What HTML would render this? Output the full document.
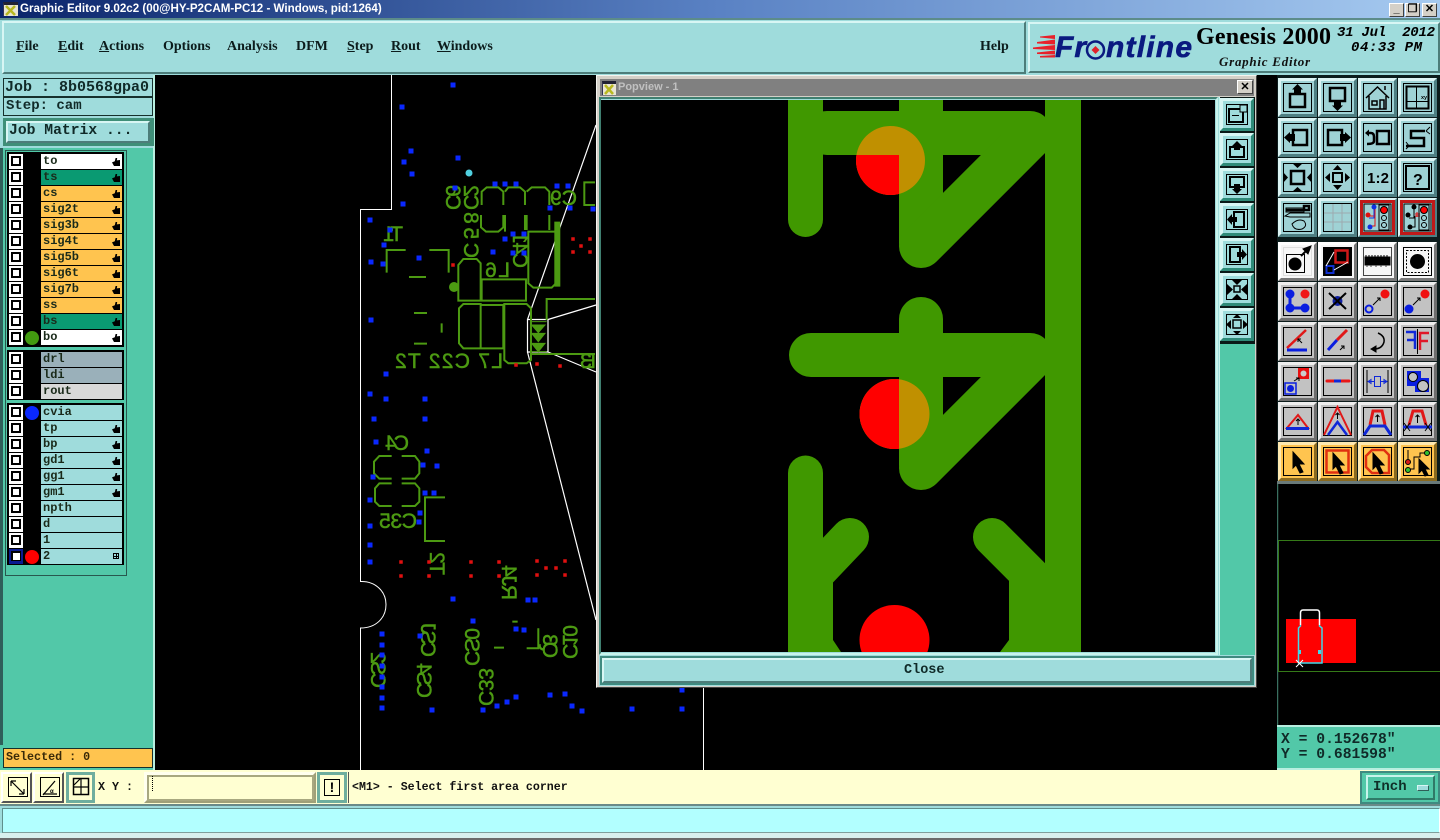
<!DOCTYPE html>
<html><head><meta charset="utf-8"><title>Graphic Editor</title>
<style>
*{box-sizing:border-box}
html,body{margin:0;padding:0;background:#000;width:1440px;height:840px;overflow:hidden}
body{position:relative;font-family:"Liberation Mono",monospace;font-weight:bold;color:#102a28}
.a{position:absolute}
.x{position:absolute;white-space:pre}
.bev{border:2px solid;border-color:#d8f6f4 #4d7d7a #4d7d7a #d8f6f4}
.m{position:absolute;top:39px;font:bold 14px "Liberation Serif",serif;color:#0c1c1c}
.m u{text-decoration:underline}
.row{position:absolute;left:7px;width:117px;height:15px}
.c{position:absolute;left:2px;top:0;width:14px;height:15px;background:#fff}
.c:after{content:"";position:absolute;left:2px;top:2px;width:10px;height:10px;border:2px solid #000;box-sizing:border-box}
.n{position:absolute;left:34px;top:0;width:81px;height:15px;padding-left:2px;font:bold 12px/14px "Liberation Mono",monospace;color:#1a2a1a}
.d{position:absolute;left:18px;top:1px;width:14px;height:14px;border-radius:50%}
.h{position:absolute;right:2px;top:4px;width:8px;height:8px;background:#000;clip-path:polygon(45% 0,65% 0,60% 30%,100% 25%,100% 100%,25% 100%,0 55%,35% 40%)}
.w{background:#fff}.g{background:#0a9a72}.o{background:#ffc44f}.b{background:#9fdcdc}
.tg{position:absolute;display:grid;grid-template-columns:repeat(4,40px);grid-auto-rows:40px}
.t{position:relative;width:39px;height:39px;border:3px solid;background:#9fd2d5;border-color:#dcf4f4 #4f7f82 #4f7f82 #dcf4f4}
.t svg{position:absolute;left:-3px;top:-3px;width:39px;height:39px}
.t.wh{background:#f6f6f6;border-color:#fff #777 #777 #fff}
.t.gr{background:#c2c2c2;border-color:#eee #6e6e6e #6e6e6e #eee}
.t.or{background:#ffc44f;border-color:#ffe9b0 #8a6a20 #8a6a20 #ffe9b0}
svg{display:block}
.pb{position:absolute;width:34px;height:33px;background:#9fdcdc;border:3px solid;border-color:#d8f6f4 #2f8a78 #2f8a78 #d8f6f4}
.pb svg{position:absolute;left:-3px;top:-3px;width:34px;height:33px}
.wb{position:absolute;width:15px;height:14px;background:#d4d0c8;border:1px solid;border-color:#fff #404040 #404040 #fff;font:bold 11px/11px "Liberation Sans",sans-serif;color:#000;text-align:center}
</style></head><body>

<!-- PCB canvas -->
<svg class="a" style="left:0;top:0" width="1440" height="840" viewBox="0 0 1440 840">
<rect width="1440" height="840" fill="#000"/>
<path d="M391.500 75V209.500H360.500V581.500C376 581 386 592 386 604.500C386 618 376 628 360.500 628V770M703.500 688V770" fill="none" stroke="#fff" stroke-width="1"/>
<path d="M527.500 319.500H548V352H527.500ZM527.500 319.500L596 125M548 319.500L596 305M548 352L596 372M527.500 352L596 620" fill="none" stroke="#fff" stroke-width="1.200"/>
<g transform="translate(350,150) scale(.3333)" fill="none" stroke="#4c9a12" stroke-width="6">
<path d="M395 165V125L410 112H445L460 125V165M465 125L475 112H510L525 125V165M530 125L545 112H585L598 125V165M393 195V232L408 245H445L460 232V195M465 195V245M525 195V240M530 195V240M598 195V240"/>
<path d="M535 245H600L618 245V400L605 413H550L535 400Z"/>
<path d="M622 215V410" stroke-width="18"/>
<path d="M110 368V300H167M238 300H296V368M177 381H228M192 489H231M192 581H231M275 520V548"/>
<path d="M325 452V345L340 327H380L392 340V452H340ZM395 388H528V452H395ZM327 475L340 462H392V595H340L327 580ZM392 465H460V595H392ZM463 462H530L543 475V630L530 640H475L463 630Z"/>
<path d="M590 510V447H735M540 612H735M735 97H703V165H735"/>
<path d="M540 515H590M540 605H590M545 525L585 525L565 548ZM545 550L585 550L565 575ZM545 580L585 580L565 605Z" fill="#4c9a12" stroke-width="3"/>
</g>
<g transform="translate(350,400) scale(.3333)" fill="none" stroke="#4c9a12" stroke-width="6">
<path d="M125 168H88L72 185V220L88 236H125M155 168H195L208 185V220L195 236H155M125 250H88L75 265V305L88 318H125M155 250H195L208 265V305L195 318H155M285 292H225V423H285M565 685V745H530M432 743H462M487 665H503"/>
</g>
<circle cx="454" cy="287" r="5" fill="#4c9a12"/>
<g font-family="'Liberation Sans',sans-serif" font-weight="normal" fill="#4c9a12" stroke="#4c9a12" stroke-width=".5" font-size="21">
<text transform="translate(446,210) rotate(-90) scale(1,-1)" textLength="25">C6</text>
<text transform="translate(464,210) rotate(-90) scale(1,-1)" textLength="25">C2</text>
<text transform="translate(464,258) rotate(-90) scale(1,-1)" textLength="46">C58</text>
<text transform="translate(513,268) rotate(-90) scale(1,-1)" textLength="36">C41</text>
<text transform="translate(510,277) scale(-1,1)" textLength="25">L6</text>
<text transform="translate(577,205) scale(-1,1)" textLength="27">C9</text>
<text transform="translate(403,241) scale(-1,1)" textLength="20">T1</text>
<text transform="translate(503,368) scale(-1,1)" textLength="108" xml:space="preserve">L7 C22 T2</text>
<text transform="translate(596,368) scale(-1,1)" textLength="16">E3</text>
<text transform="translate(409,450) scale(-1,1)" textLength="24">C4</text>
<text transform="translate(417,528) scale(-1,1)" textLength="38">C35</text>
<text transform="translate(430,575) rotate(-90) scale(1,-1)" textLength="23">T2</text>
<text transform="translate(502,600) rotate(-90) scale(1,-1)" textLength="35">RJ4</text>
<text transform="translate(371,688) rotate(-90) scale(1,-1)" textLength="36">CS2</text>
<text transform="translate(417,698) rotate(-90) scale(1,-1)" textLength="35">CS4</text>
<text transform="translate(421,657) rotate(-90) scale(1,-1)" textLength="34">CSJ</text>
<text transform="translate(465,666) rotate(-90) scale(1,-1)" textLength="38">CS0</text>
<text transform="translate(479,706) rotate(-90) scale(1,-1)" textLength="38">C33</text>
<text transform="translate(543,658) rotate(-90) scale(1,-1)" textLength="24">Q3</text>
<text transform="translate(563,659) rotate(-90) scale(1,-1)" textLength="34">C10</text>
</g>
<path stroke="#0a28ff" stroke-width="5" stroke-linecap="square" fill="none" transform="translate(0,0)" d="M453 85h.01M402 107h.01M411 151h.01M404 162h.01M458 158h.01M412 174h.01M403 204h.01M370 220h.01M390 230h.01M384 245h.01M419 258h.01M371 262h.01M383 264h.01M371 320h.01M386 374h.01M370 394h.01M386 399h.01M425 399h.01M495 184h.01M505 184h.01M516 184h.01M557 186h.01M568 186h.01M550 208h.01M570 208h.01M593 209h.01M513 234h.01M524 234h.01M505 239h.01M493 252h.01M513 253h.01M524 253h.01M455 188h.01M374 419h.01M425 419h.01M376 442h.01M427 451h.01M423 465h.01M437 466h.01M373 477h.01M425 493h.01M434 493h.01M370 500h.01M420 513h.01M419 522h.01M370 526h.01M370 545h.01M370 562h.01M453 599h.01M528 600h.01M535 600h.01M473 621h.01M516 629h.01M524 630h.01M382 634h.01M382 645h.01M420 636h.01M382 655h.01M382 666h.01M382 677h.01M382 687h.01M382 698h.01M382 708h.01M432 710h.01M483 710h.01M497 706h.01M507 702h.01M516 697h.01M550 695h.01M565 694h.01M572 706h.01M582 711h.01M632 709h.01M682 690h.01M682 709h.01"/>
<circle cx="469" cy="173" r="3.500" fill="#50d0e0"/>
<path stroke="#e01010" stroke-width="3.500" stroke-linecap="square" fill="none" d="M401 562h.01M401 576h.01M429 562h.01M429 576h.01M471 562h.01M471 576h.01M499 562h.01M499 576h.01M537 561h.01M546 568h.01M556 568h.01M565 561h.01M537 575h.01M565 575h.01M453 265h.01M573 239h.01M590 239h.01M581 246h.01M573 252h.01M590 252h.01M516 365h.01M537 364h.01M560 366h.01"/>
</svg>

<!-- title bar -->
<div class="a" style="left:0;top:0;width:1440px;height:18px;background:linear-gradient(90deg,#0a246a 0%,#5a82c4 50%,#a6caf0 100%)"></div>
<div class="a" style="left:3px;top:2px;width:15px;height:14px;background:#e8e4d0;border-top:3px solid #223;border-left:1px solid #335"><svg width="14" height="11" viewBox="0 0 14 11"><path d="M2 1L11 10M11 1L2 10" stroke="#b8b820" stroke-width="2.500"/></svg></div>
<div class="x" style="left:20px;top:1px;font:bold 11.600px/16px 'Liberation Sans',sans-serif;color:#fff">Graphic Editor 9.02c2 (00@HY-P2CAM-PC12 - Windows, pid:1264)</div>
<div class="wb" style="left:1389px;top:3px">_</div>
<div class="wb" style="left:1405px;top:3px">&#10064;</div>
<div class="wb" style="left:1422px;top:3px">&#10005;</div>

<!-- menu -->
<div class="a" style="left:0;top:18px;width:1440px;height:57px;background:#9fdcdc;border-top:2px solid #5c8c8a"></div>
<div class="a bev" style="left:2px;top:21px;width:1024px;height:53px;background:#9fdcdc"></div>
<div class="a bev" style="left:1028px;top:22px;width:412px;height:51px;background:#9fdcdc"></div>
<div class="m" style="left:16px"><u>F</u>ile</div>
<div class="m" style="left:58px"><u>E</u>dit</div>
<div class="m" style="left:99px"><u>A</u>ctions</div>
<div class="m" style="left:163px">Options</div>
<div class="m" style="left:227px">Analysis</div>
<div class="m" style="left:296px">DFM</div>
<div class="m" style="left:347px"><u>S</u>tep</div>
<div class="m" style="left:391px"><u>R</u>out</div>
<div class="m" style="left:437px"><u>W</u>indows</div>
<div class="m" style="left:980px">Help</div>
<svg class="a" style="left:1028px;top:22px" width="412" height="51" viewBox="1028 22 412 51">
<path d="M1055 35L1040 36.500V37.500L1055 39ZM1055 39.500L1037 42V43.500L1055 44.500ZM1055 45L1033 47.500V49L1055 50ZM1055 50.500L1037 52.500V54L1055 54.500ZM1055 55L1040 56V57.500L1055 57.500Z" fill="#e8202a"/>
<text x="1055" y="57" font-family="'Liberation Sans',sans-serif" font-weight="bold" font-style="italic" font-size="30" fill="#0a1a80" textLength="31" stroke="#0a1a80" stroke-width=".6">Fr</text>
<circle cx="1095.500" cy="50" r="8.500" fill="none" stroke="#0a1a80" stroke-width="2.500"/>
<path d="M1095.500 46L1099.500 50L1095.500 54L1091.500 50Z" fill="#e0202a"/>
<text x="1106" y="57" font-family="'Liberation Sans',sans-serif" font-weight="bold" font-style="italic" font-size="30" fill="#0a1a80" textLength="86" stroke="#0a1a80" stroke-width=".6">ntline</text>
<text x="1196" y="44" font-family="'Liberation Serif',serif" font-weight="bold" font-size="24" fill="#000" textLength="135">Genesis 2000</text>
<text x="1219" y="66" font-family="'Liberation Serif',serif" font-weight="bold" font-style="italic" font-size="13" fill="#111" textLength="91">Graphic Editor</text>
<text x="1337" y="36" font-family="'Liberation Mono',monospace" font-weight="bold" font-style="italic" font-size="14" fill="#000" textLength="98" xml:space="preserve">31 Jul  2012</text>
<text x="1351" y="51" font-family="'Liberation Mono',monospace" font-weight="bold" font-style="italic" font-size="14" fill="#000" textLength="71" xml:space="preserve">04:33 PM</text>
</svg>

<!-- left panel -->
<div class="a" style="left:0;top:75px;width:155px;height:695px;background:#52c8a8;border-right:2px solid #b8efe0"></div>
<div class="a" style="left:0;top:75px;width:155px;height:73px;background:#9fdcdc;border-right:2px solid #b8efe0"></div>
<div class="a" style="left:0;top:148px;width:3px;height:597px;background:#2f5f5a"></div>
<div class="a" style="left:3px;top:78px;width:150px;height:19px;background:#9fdcdc;border:1px solid #16302c"></div>
<div class="a" style="left:3px;top:97px;width:150px;height:19px;background:#9fdcdc;border:1px solid #16302c"></div>
<div class="x" style="left:5px;top:79px;font-size:15px;line-height:17px">Job : 8b0568gpa0</div>
<div class="x" style="left:6px;top:98px;font-size:14px;line-height:17px">Step: cam</div>
<div class="a" style="left:3px;top:118px;width:151px;height:28px;background:#3f8f78"></div>
<div class="a bev" style="left:6px;top:121px;width:144px;height:22px;background:#9fdcdc"></div>
<div class="x" style="left:9px;top:123px;font-size:14.700px;line-height:17px">Job Matrix ...</div>

<div class="a" style="left:5px;top:150px;width:122px;height:426px;background:#52c8a8;border:1px solid #28584e"></div>
<div class="a" style="left:7px;top:152px;width:117px;height:195px;background:#000"></div>
<div class="a" style="left:7px;top:350px;width:117px;height:50px;background:#000"></div>
<div class="a" style="left:7px;top:403px;width:117px;height:162px;background:#000"></div>

<div class="row" style="top:154px"><i class="c"></i><span class="n w">to<i class="h"></i></span></div>
<div class="row" style="top:170px"><i class="c"></i><span class="n g">ts<i class="h"></i></span></div>
<div class="row" style="top:186px"><i class="c"></i><span class="n o">cs<i class="h"></i></span></div>
<div class="row" style="top:202px"><i class="c"></i><span class="n o">sig2t<i class="h"></i></span></div>
<div class="row" style="top:218px"><i class="c"></i><span class="n o">sig3b<i class="h"></i></span></div>
<div class="row" style="top:234px"><i class="c"></i><span class="n o">sig4t<i class="h"></i></span></div>
<div class="row" style="top:250px"><i class="c"></i><span class="n o">sig5b<i class="h"></i></span></div>
<div class="row" style="top:266px"><i class="c"></i><span class="n o">sig6t<i class="h"></i></span></div>
<div class="row" style="top:282px"><i class="c"></i><span class="n o">sig7b<i class="h"></i></span></div>
<div class="row" style="top:298px"><i class="c"></i><span class="n o">ss<i class="h"></i></span></div>
<div class="row" style="top:314px"><i class="c"></i><span class="n g">bs<i class="h"></i></span></div>
<div class="row" style="top:330px"><i class="c"></i><i class="d" style="background:#429a10"></i><span class="n w">bo<i class="h"></i></span></div>
<div class="row" style="top:352px"><i class="c"></i><span class="n" style="background:#9ab0ba">drl</span></div>
<div class="row" style="top:368px"><i class="c"></i><span class="n" style="background:#9ab0ba">ldi</span></div>
<div class="row" style="top:384px"><i class="c"></i><span class="n" style="background:#d8d8d8">rout</span></div>
<div class="row" style="top:405px"><i class="c"></i><i class="d" style="background:#0a28ff"></i><span class="n b">cvia</span></div>
<div class="row" style="top:421px"><i class="c"></i><span class="n b">tp<i class="h"></i></span></div>
<div class="row" style="top:437px"><i class="c"></i><span class="n b">bp<i class="h"></i></span></div>
<div class="row" style="top:453px"><i class="c"></i><span class="n b">gd1<i class="h"></i></span></div>
<div class="row" style="top:469px"><i class="c"></i><span class="n b">gg1<i class="h"></i></span></div>
<div class="row" style="top:485px"><i class="c"></i><span class="n b">gm1<i class="h"></i></span></div>
<div class="row" style="top:501px"><i class="c"></i><span class="n b">npth</span></div>
<div class="row" style="top:517px"><i class="c"></i><span class="n b">d</span></div>
<div class="row" style="top:533px"><i class="c"></i><span class="n b">1</span></div>
<div class="row" style="top:549px"><i class="c" style="background:#0a1a90"></i><i class="a" style="left:6px;top:4px;width:7px;height:7px;background:#fff"></i><i class="d" style="background:#ff0000"></i><span class="n b">2<i class="a" style="right:3px;top:4px;width:6px;height:6px;border:1px solid #000;background:linear-gradient(#000,#000) center/1px 100% no-repeat,linear-gradient(#000,#000) center/100% 1px no-repeat"></i></span></div>

<div class="a" style="left:0;top:745px;width:155px;height:25px;background:#52c8a8;border-right:2px solid #b8efe0"></div>
<div class="a" style="left:3px;top:748px;width:150px;height:20px;background:#ffc44f;border:1px solid #16302c"></div>
<div class="x" style="left:6px;top:750px;font-size:11.700px;line-height:15px;color:#3a2a08">Selected : 0</div>

<!-- popview -->
<div class="a" style="left:596px;top:75px;width:661px;height:613px;background:#d4d0c8;border:1px solid;border-color:#f4f4f0 #404040 #404040 #f4f4f0"></div>
<div class="a" style="left:600px;top:79px;width:654px;height:17px;background:#808080"></div>
<div class="a" style="left:602px;top:81px;width:14px;height:14px;background:#e8e4d0;border-top:3px solid #223;border-left:1px solid #335"><svg width="13" height="11" viewBox="0 0 13 11"><path d="M2 1L10 10M10 1L2 10" stroke="#b8b820" stroke-width="2.500"/></svg></div>
<div class="x" style="left:618px;top:80px;font:bold 11px/15px 'Liberation Sans',sans-serif;color:#c0c0c0">Popview - 1</div>
<div class="wb" style="left:1237px;top:80px;width:16px;line-height:12px">&#10005;</div>
<div class="a" style="left:599px;top:97px;width:656px;height:589px;background:#9fdcdc"></div>
<div class="a" style="left:599px;top:97px;width:619px;height:558px;border:2px solid;border-color:#3f7f70 #c8f4ec #c8f4ec #3f7f70"></div>
<svg class="a" style="left:601px;top:100px" width="614" height="552" viewBox="601 100 614 552">
<defs>
<clipPath id="q1"><rect x="840" y="155" width="59" height="50"/></clipPath>
<clipPath id="q2"><rect x="840" y="370" width="59" height="90"/></clipPath>
</defs>
<rect x="601" y="100" width="614" height="552" fill="#000"/>
<g stroke="#409800" fill="none" stroke-linecap="round">
<path d="M805.500 90V219.500" stroke-width="35"/>
<path d="M827 133H1030M921 90V243" stroke-width="44"/>
<path d="M921 246L1030 137" stroke-width="44"/>
<path d="M811 355H1030M921 319V465" stroke-width="44"/>
<path d="M921 468L1030 359" stroke-width="44"/>
<path d="M805.500 473V660" stroke-width="35"/>
<path d="M850 537L811 578" stroke-width="38"/>
<path d="M992 537L1040 585" stroke-width="38"/>
</g>
<rect x="1045" y="90" width="36" height="570" fill="#409800"/>
<rect x="788" y="575" width="45" height="80" fill="#409800"/>
<rect x="1009" y="575" width="40" height="80" fill="#409800"/>
<path d="M833 640L841 652H833ZM1009 640L1000 652H1009Z" fill="#409800"/>
<circle cx="890.500" cy="160.500" r="34.500" fill="#c09000"/>
<circle cx="890.500" cy="160.500" r="34.500" fill="#f00" clip-path="url(#q1)"/>
<circle cx="894.500" cy="414" r="35" fill="#c09000"/>
<circle cx="894.500" cy="414" r="35" fill="#f00" clip-path="url(#q2)"/>
<circle cx="894.500" cy="640" r="35" fill="#f00"/>
</svg>
<div class="a" style="left:1219px;top:97px;width:36px;height:558px;background:#52c8a8;border-left:1px solid #c8f4ec"></div>
<div class="a" style="left:1220px;top:97px;width:35px;height:247px;background:#0a1a18"></div>
<div class="pb" style="left:1220px;top:98px"><svg viewBox="0 0 34 33" fill="none" stroke="#000" stroke-width="2"><rect x="6.500" y="6.500" width="21" height="20" stroke-width="1"/><rect x="9" y="11" width="14" height="13"/><rect x="20" y="7" width="7" height="7" stroke-width="1" fill="#9fdcdc"/><path d="M12 17.500H19" stroke-width="1"/></svg></div>
<div class="pb" style="left:1220px;top:133px"><svg viewBox="0 0 34 33" fill="none" stroke="#000" stroke-width="2"><rect x="6.500" y="6.500" width="21" height="20" stroke-width="1"/><rect x="10" y="14" width="14" height="10"/><path d="M17 8L22 13H20V17H14V13H12Z" fill="#000" stroke="none"/></svg></div>
<div class="pb" style="left:1220px;top:168px"><svg viewBox="0 0 34 33" fill="none" stroke="#000" stroke-width="2"><rect x="6.500" y="6.500" width="21" height="20" stroke-width="1"/><rect x="10" y="9" width="14" height="10"/><path d="M17 26L12 21H14V16H20V21H22Z" fill="#000" stroke="none"/></svg></div>
<div class="pb" style="left:1220px;top:203px"><svg viewBox="0 0 34 33" fill="none" stroke="#000" stroke-width="2"><rect x="6.500" y="6.500" width="21" height="20" stroke-width="1"/><rect x="14" y="9" width="10" height="15"/><path d="M7 16.500L12 11V14H17V19H12V22Z" fill="#000" stroke="none"/></svg></div>
<div class="pb" style="left:1220px;top:238px"><svg viewBox="0 0 34 33" fill="none" stroke="#000" stroke-width="2"><rect x="6.500" y="6.500" width="21" height="20" stroke-width="1"/><rect x="10" y="9" width="10" height="15"/><path d="M27 16.500L22 11V14H17V19H22V22Z" fill="#000" stroke="none"/></svg></div>
<div class="pb" style="left:1220px;top:273px"><svg viewBox="0 0 34 33" fill="none" stroke="#000" stroke-width="1.500"><rect x="6.500" y="6.500" width="21" height="20" stroke-width="1"/><rect x="14" y="13" width="6" height="6"/><path d="M17 12L12 7H22ZM17 21L12 26H22ZM13 16.500L7 11V22ZM21 16.500L27 11V22Z" fill="#000" stroke="none"/></svg></div>
<div class="pb" style="left:1220px;top:308px"><svg viewBox="0 0 34 33" fill="none" stroke="#000" stroke-width="1.500"><rect x="6.500" y="6.500" width="21" height="20" stroke-width="1"/><rect x="13" y="12" width="8" height="8"/><path d="M17 6L13 10H21ZM17 27L13 23H21ZM6 16.500L11 12V21ZM28 16.500L23 12V21Z" fill="#000" stroke="none"/></svg></div>
<div class="a" style="left:600px;top:656px;width:654px;height:29px;background:#3f8a80"></div>
<div class="a bev" style="left:602px;top:658px;width:650px;height:25px;background:#9fdcdc"></div>
<div class="x" style="left:904px;top:663px;font-size:13.500px;line-height:16px">Close</div>

<!-- right tools -->
<div class="a" style="left:1277px;top:75px;width:163px;height:410px;background:#0c1c1c"></div>
<div class="tg" style="left:1278px;top:78px">
<div class="t"><svg viewBox="0 0 39 39" fill="none" stroke="#000" stroke-width="2"><rect x="5.500" y="5.500" width="28" height="28" stroke-width="1"/><rect x="12" y="16" width="15" height="13" stroke-width="2.500"/><path d="M19.500 6L25 11.500H23V17H16V11.500H14Z" fill="#000" stroke="none"/></svg></div>
<div class="t"><svg viewBox="0 0 39 39" fill="none" stroke="#000" stroke-width="2"><rect x="5.500" y="5.500" width="28" height="28" stroke-width="1"/><rect x="12" y="10" width="15" height="13" stroke-width="2.500"/><path d="M19.500 33L14 27.500H16V22H23V27.500H25Z" fill="#000" stroke="none"/></svg></div>
<div class="t"><svg viewBox="0 0 39 39" fill="none" stroke="#000" stroke-width="1.500"><rect x="5.500" y="5.500" width="28" height="28" stroke-width="1"/><path d="M8 20L19.500 9L31 20M11 18V31H28V18M22 31V22H26V31M14 23H19V27H14ZM27 12V8"/></svg></div>
<div class="t"><svg viewBox="0 0 39 39" fill="none" stroke="#000" stroke-width="2"><rect x="5.500" y="5.500" width="28" height="28" stroke-width="1"/><rect x="8.500" y="8.500" width="22" height="22"/><path d="M9 23.500H30M18.500 9V30" stroke-width="1"/><text x="23" y="21" font-size="5.500" font-family="'Liberation Sans',sans-serif" fill="#000" stroke="none">xy</text></svg></div>

<div class="t"><svg viewBox="0 0 39 39" fill="none" stroke="#000" stroke-width="2"><rect x="5.500" y="5.500" width="28" height="28" stroke-width="1"/><rect x="15" y="12" width="14" height="15" stroke-width="2.500"/><path d="M6 19.500L12 14V16H17V23H12V25Z" fill="#000" stroke="none"/></svg></div>
<div class="t"><svg viewBox="0 0 39 39" fill="none" stroke="#000" stroke-width="2"><rect x="5.500" y="5.500" width="28" height="28" stroke-width="1"/><rect x="10" y="12" width="14" height="15" stroke-width="2.500"/><path d="M33 19.500L27 14V16H22V23H27V25Z" fill="#000" stroke="none"/></svg></div>
<div class="t"><svg viewBox="0 0 39 39" fill="none" stroke="#000" stroke-width="2.500"><rect x="5.500" y="5.500" width="28" height="28" stroke-width="1"/><rect x="19" y="13" width="12" height="13"/><path d="M10 15H13Q16 15 16 19V23Q16 26 9 26"/><path d="M7 15L11 11.500V18.500Z" fill="#000" stroke="none"/></svg></div>
<div class="t"><svg viewBox="0 0 39 39" fill="none" stroke="#000" stroke-width="2.500"><rect x="5.500" y="5.500" width="28" height="28" stroke-width="1"/><path d="M27 13H13V20H26V28H8"/><path d="M28 13L32 9M28 13L32 16M8 24L11 28L8 31" stroke-width="1"/></svg></div>

<div class="t"><svg viewBox="0 0 39 39" fill="none" stroke="#000" stroke-width="2.500"><rect x="5.500" y="5.500" width="28" height="28" stroke-width="1"/><rect x="13" y="13" width="13" height="13"/><path d="M19.500 10L14 5H25ZM19.500 29L14 34H25ZM10 19.500L5 14V25ZM29 19.500L34 14V25Z" fill="#000" stroke="none"/></svg></div>
<div class="t"><svg viewBox="0 0 39 39" fill="none" stroke="#000" stroke-width="2"><rect x="5.500" y="5.500" width="28" height="28" stroke-width="1"/><rect x="15" y="15" width="9" height="9"/><path d="M19.500 7L15 12H24ZM19.500 32L15 27H24ZM7 19.500L12 15V24ZM32 19.500L27 15V24Z" fill="#000" stroke="none"/></svg></div>
<div class="t"><svg viewBox="0 0 39 39" fill="none" stroke="#000"><rect x="5.500" y="5.500" width="28" height="28" stroke-width="1"/><text x="9" y="25" font-size="15" font-weight="bold" font-family="'Liberation Sans',sans-serif" fill="#000" stroke="none" textLength="22">1:2</text></svg></div>
<div class="t"><svg viewBox="0 0 39 39" fill="none" stroke="#000" stroke-width="2"><rect x="5.500" y="5.500" width="28" height="28" stroke-width="1"/><rect x="8" y="8" width="23" height="23"/><text x="15" y="27" font-size="16" font-weight="bold" font-family="'Liberation Sans',sans-serif" fill="#000" stroke="none">?</text></svg></div>

<div class="t"><svg viewBox="0 0 39 39" fill="none" stroke="#000" stroke-width="1"><rect x="5.500" y="5.500" width="28" height="28"/><path d="M8 10H26V14H8ZM7 18L12 15H32V19H12ZM14 26Q20 20 26 23Q30 28 24 31Q16 33 14 26Z"/><path d="M26 8H31V12H26ZM8 12H26" stroke-width="2.500"/></svg></div>
<div class="t"><svg viewBox="0 0 39 39" fill="none" stroke="#9caab0" stroke-width="1"><rect x="5.500" y="5.500" width="28" height="28" stroke="#000"/><path d="M15 6V33M24 6V33M6 15H33M6 24H33"/></svg></div>
<div class="t" style="background:#9fd2d5"><svg viewBox="0 0 39 39" fill="none" stroke-width="1"><rect x="3.500" y="3.500" width="32" height="32" stroke="#c01818" stroke-width="3"/><rect x="6" y="6" width="27" height="27" stroke="#000"/><path d="M8 18H17V28H13M17 18V8" stroke="#e01010"/><circle cx="10" cy="17" r="2.500" fill="#e01010"/><path d="M16 9V20H11" stroke="#1030e0" stroke-width="1"/><circle cx="16" cy="9" r="2.500" fill="#1030e0"/><circle cx="12" cy="29" r="2.500" fill="#1030e0"/><rect x="21" y="7" width="10" height="25" stroke="#000"/><circle cx="26" cy="12" r="3.500" fill="#f00" stroke="#000"/><circle cx="26" cy="20" r="2.500" stroke="#000"/><circle cx="26" cy="27" r="2.500" stroke="#000"/></svg></div>
<div class="t"><svg viewBox="0 0 39 39" fill="none" stroke-width="1"><rect x="3.500" y="3.500" width="32" height="32" stroke="#c01818" stroke-width="3"/><rect x="6" y="6" width="27" height="27" stroke="#000"/><path d="M16 9V20H11M12 29H17V18" stroke="#000"/><circle cx="16" cy="9" r="2.500" fill="#000"/><circle cx="10" cy="17" r="2.500" fill="#000"/><circle cx="12" cy="29" r="2.500" fill="#000"/><path d="M17 16H22M17 18H22M19 14V19" stroke="#e01010"/><rect x="21" y="7" width="10" height="25" stroke="#000"/><circle cx="26" cy="12" r="3.500" fill="#f00" stroke="#000"/><circle cx="26" cy="20" r="2.500" stroke="#000"/><circle cx="26" cy="27" r="2.500" stroke="#000"/></svg></div>
</div>

<div class="tg" style="left:1278px;top:242px">
<div class="t wh"><svg viewBox="0 0 39 39" fill="none" stroke="#000" stroke-width="1"><rect x="5.500" y="5.500" width="28" height="28" stroke="#ddd"/><rect x="8.500" y="12.500" width="18" height="18"/><circle cx="17" cy="22" r="6" fill="#000"/><path d="M23 14L31 6" stroke-width="2"/><path d="M33 4L25 7L30 12Z" fill="#000"/></svg></div>
<div class="t wh"><svg viewBox="0 0 39 39" fill="none" stroke-width="1"><rect x="5" y="5" width="29" height="29" fill="#000"/><rect x="17.500" y="8.500" width="12" height="12" stroke="#d01818" stroke-width="2.500"/><rect x="8.500" y="24" width="7" height="7" stroke="#1030d0" stroke-width="2"/><path d="M16 10L8 24M30 20L16 28" stroke="#fff"/></svg></div>
<div class="t wh"><svg viewBox="0 0 39 39" fill="none" stroke="#000" stroke-width="1"><rect x="5.500" y="5.500" width="28" height="28" stroke="#444"/><rect x="7" y="15" width="25" height="8" fill="#000"/><path d="M8 13V15M11 13V15M14 13V15M17 13V15M20 13V15M23 13V15M26 13V15M29 13V15" stroke="#000"/><path d="M9 23V25M13 23V25M18 23V25M23 23V25M28 23V25" stroke="#444"/></svg></div>
<div class="t wh"><svg viewBox="0 0 39 39" fill="none" stroke="#000" stroke-width="1"><rect x="5.500" y="5.500" width="28" height="28"/><rect x="8.500" y="8.500" width="22" height="22" stroke-dasharray="2 1.500"/><circle cx="19.500" cy="19.500" r="7" fill="#000"/></svg></div>

<div class="t gr"><svg viewBox="0 0 39 39" fill="none" stroke="#000" stroke-width="1"><rect x="5.500" y="5.500" width="28" height="28"/><path d="M12 12V26H27" stroke="#0a1ee0" stroke-width="3"/><circle cx="12" cy="12" r="4.500" fill="#0a1ee0" stroke="none"/><circle cx="12" cy="26" r="4.500" fill="#0a1ee0" stroke="none"/><circle cx="27" cy="26" r="4.500" fill="#0a1ee0" stroke="none"/><circle cx="27" cy="12" r="4.500" fill="#f01818" stroke="none"/></svg></div>
<div class="t gr"><svg viewBox="0 0 39 39" fill="none" stroke="#000" stroke-width="1"><rect x="5.500" y="5.500" width="28" height="28"/><circle cx="19.500" cy="19" r="5" fill="#1020a0" stroke="none"/><path d="M11 11L28 27M28 11L11 27" stroke-width="2"/></svg></div>
<div class="t gr"><svg viewBox="0 0 39 39" fill="none" stroke="#000" stroke-width="1"><rect x="5.500" y="5.500" width="28" height="28"/><circle cx="27" cy="12" r="4.500" fill="#f01010" stroke="none"/><circle cx="11" cy="27" r="3.500" stroke="#0a1ee0" stroke-width="2"/><path d="M15 23L22 16M19 16H22V19"/></svg></div>
<div class="t gr"><svg viewBox="0 0 39 39" fill="none" stroke="#000" stroke-width="1"><rect x="5.500" y="5.500" width="28" height="28"/><circle cx="27" cy="12" r="4.500" fill="#f01010" stroke="none"/><circle cx="11" cy="27" r="4.500" fill="#0a1ee0" stroke="none"/><path d="M15 23L22 16M19 16H22V19"/></svg></div>

<div class="t gr"><svg viewBox="0 0 39 39" fill="none" stroke="#000" stroke-width="1"><rect x="5.500" y="5.500" width="28" height="28"/><path d="M9 26L28 8" stroke="#e01818" stroke-width="2.500"/><path d="M9 28H29" stroke="#0a1ee0" stroke-width="3"/><path d="M24 21L20 17M20 20V17H23"/></svg></div>
<div class="t gr"><svg viewBox="0 0 39 39" fill="none" stroke="#000" stroke-width="1"><rect x="5.500" y="5.500" width="28" height="28"/><path d="M10 28L19 18" stroke="#0a1ee0" stroke-width="3"/><path d="M19 18L29 8" stroke="#e01818" stroke-width="3"/><path d="M22 28L26 24M23 24H26V27"/></svg></div>
<div class="t gr"><svg viewBox="0 0 39 39" fill="none" stroke="#000" stroke-width="1"><rect x="5.500" y="5.500" width="28" height="28"/><path d="M20 11Q27 14 26 20Q24 27 16 27" stroke-width="1.500"/><path d="M13 27L18 24V30Z" fill="#000"/></svg></div>
<div class="t gr"><svg viewBox="0 0 39 39" fill="none" stroke="#000" stroke-width="1"><rect x="5.500" y="5.500" width="28" height="28"/><path d="M19.500 7V32"/><path d="M8 10H17V27M9 18H17" stroke="#1028d8" stroke-width="2.500"/><path d="M31 11H22V28M22 19H30" stroke="#e01828" stroke-width="2.500"/></svg></div>

<div class="t gr"><svg viewBox="0 0 39 39" fill="none" stroke="#000" stroke-width="1"><rect x="5.500" y="5.500" width="28" height="28"/><rect x="20" y="6" width="11" height="11" fill="#e81010" stroke="none"/><circle cx="25.500" cy="11.500" r="3" fill="#ccc" stroke="none"/><rect x="7" y="21" width="11" height="11" stroke="#0a1ee0" stroke-width="1.500"/><circle cx="12.500" cy="26.500" r="3.500" fill="#0a1ee0" stroke="none"/><path d="M16 19L21 16M18 16H21V19"/></svg></div>
<div class="t gr"><svg viewBox="0 0 39 39" fill="none" stroke="#000" stroke-width="1"><rect x="5.500" y="5.500" width="28" height="28"/><path d="M9 19H16M23 19H31" stroke="#e81818" stroke-width="3" stroke-linecap="round"/><path d="M16 19H23" stroke="#1028d8" stroke-width="3"/></svg></div>
<div class="t gr"><svg viewBox="0 0 39 39" fill="none" stroke="#000" stroke-width="1"><rect x="5.500" y="5.500" width="28" height="28"/><path d="M9 8V31M30 8V31" /><path d="M10 19.500H29M10 19.500L13 17.500V21.500ZM29 19.500L26 17.500V21.500Z" stroke="#1028d8"/><rect x="16.500" y="14.500" width="6" height="10" fill="#c2c2c2" stroke="#1028d8"/></svg></div>
<div class="t gr"><svg viewBox="0 0 39 39" fill="none" stroke="#000" stroke-width="1"><rect x="5.500" y="5.500" width="28" height="28"/><path d="M9 9H23V16H31V30H17V24H9Z" fill="#0a1ee0" stroke="none"/><circle cx="15" cy="15" r="4.500" fill="#c2c2c2"/><circle cx="25" cy="24" r="5.500" fill="#c2c2c2"/></svg></div>

<div class="t gr"><svg viewBox="0 0 39 39" fill="none" stroke="#000" stroke-width="1"><rect x="5.500" y="5.500" width="28" height="28"/><path d="M9 26L20 13L30 26Z" stroke="#e01818" stroke-width="2"/><path d="M8 26.500H31" stroke="#1028d8" stroke-width="3"/><path d="M20 23V17M18 19L20 17L22 19"/></svg></div>
<div class="t gr"><svg viewBox="0 0 39 39" fill="none" stroke="#000" stroke-width="1"><rect x="5.500" y="5.500" width="28" height="28"/><path d="M6 33L19.500 5L33 33" stroke="#e01818" stroke-width="2"/><path d="M10 33L19.500 20L29 33" stroke="#1028d8" stroke-width="2.500"/><path d="M19.500 17V11M17.500 13L19.500 11L21.500 13"/></svg></div>
<div class="t gr"><svg viewBox="0 0 39 39" fill="none" stroke="#000" stroke-width="1"><rect x="5.500" y="5.500" width="28" height="28"/><path d="M12 23L15 9H24L27 23" stroke="#e01818" stroke-width="3"/><path d="M6 33L12 24H27L33 33" stroke="#1028d8" stroke-width="3"/><path d="M19.500 20V13M17.500 15L19.500 13L21.500 15"/></svg></div>
<div class="t gr"><svg viewBox="0 0 39 39" fill="none" stroke="#000" stroke-width="1"><rect x="5.500" y="5.500" width="28" height="28"/><path d="M11 23L15 9H24L28 23" stroke="#e01818" stroke-width="3"/><path d="M5 25H34" stroke="#1028d8" stroke-width="3"/><path d="M19.500 21V13M17.500 15L19.500 13L21.500 15M6 21L12 29M12 21L6 29M27 21L33 29M33 21L27 29"/></svg></div>

<div class="t or"><svg viewBox="0 0 39 39" fill="none" stroke="#000" stroke-width="1"><rect x="5.500" y="5.500" width="28" height="28"/><path d="M15 10L26 22L21 22L25 30L22 31L18 23L15 26Z" fill="#000"/></svg></div>
<div class="t or"><svg viewBox="0 0 39 39" fill="none" stroke="#000" stroke-width="1"><rect x="5.500" y="5.500" width="28" height="28"/><rect x="8.500" y="8.500" width="22" height="22" stroke="#e03010" stroke-width="2.500"/><path d="M15 11L26 23L21 23L25 31L22 32L18 24L15 27Z" fill="#000"/></svg></div>
<div class="t or"><svg viewBox="0 0 39 39" fill="none" stroke="#000" stroke-width="1"><rect x="5.500" y="5.500" width="28" height="28"/><path d="M14 8H26L31 13V31H14L8 25V14Z" stroke="#e03010" stroke-width="2.500"/><path d="M15 11L26 23L21 23L25 31L22 32L18 24L15 27Z" fill="#000"/></svg></div>
<div class="t or"><svg viewBox="0 0 39 39" fill="none" stroke="#000" stroke-width="1"><rect x="5.500" y="5.500" width="28" height="28"/><path d="M10 8V20M10 27H16V15H22V11H28"/><circle cx="10" cy="20" r="2.500" fill="#d81818"/><circle cx="10" cy="28" r="2.500" fill="#30c030"/><circle cx="29" cy="11" r="2.500" fill="#30c030"/><path d="M21 17L31 27L27 27L30 33L27 34L24 28L21 31Z" fill="#000"/></svg></div>
</div>

<!-- minimap -->
<div class="a" style="left:1277px;top:481px;width:163px;height:3px;background:#6a7a7a"></div>
<svg class="a" style="left:1277px;top:484px" width="163" height="242" viewBox="1277 484 163 242">
<rect x="1277" y="484" width="163" height="242" fill="#000"/>
<path d="M1277.500 484V726" stroke="#3a7060" stroke-width="1.500"/>
<path d="M1278 540.500H1440M1278 671.500H1440M1278.500 540V672" stroke="#357a18" stroke-width="1"/>
<rect x="1286" y="619" width="70" height="44" fill="#f00"/>
<path d="M1300.500 625V613Q1300.500 610 1303 610H1317Q1319.500 610 1319.500 613V625" fill="none" stroke="#fff" stroke-width="1.500"/>
<path d="M1300.500 625V626L1298.500 628V663H1322V628L1319.500 626V625" fill="none" stroke="#40d8e8" stroke-width="1.500"/>
<rect x="1298" y="650" width="3" height="4" fill="#40d8e8"/><rect x="1318" y="650" width="3" height="4" fill="#40d8e8"/>
<path d="M1296 660L1303 667M1303 660L1296 667" stroke="#fff" stroke-width="1"/>
</svg>
<div class="a" style="left:1277px;top:725px;width:163px;height:45px;background:#52c8a8;border-top:2px solid #b8efe0;border-bottom:2px solid #b8efe0"></div>
<div class="x" style="left:1281px;top:733px;font-size:14.700px;line-height:15px">X = 0.152678"</div>
<div class="x" style="left:1281px;top:748px;font-size:14.700px;line-height:15px">Y = 0.681598"</div>

<!-- bottom -->
<div class="a" style="left:0;top:770px;width:1440px;height:36px;background:#ffffd2;border-bottom:2px solid #6a8a88"></div>
<div class="a" style="left:1px;top:772px;width:31px;height:31px;background:#ffffd2;border:2px solid;border-color:#fff #555 #555 #fff"></div>
<div class="a" style="left:33px;top:772px;width:31px;height:31px;background:#ffffd2;border:2px solid;border-color:#fff #555 #555 #fff"></div>
<div class="a" style="left:66px;top:772px;width:29px;height:31px;background:#ffffd2;border:3px solid #6fae9e"></div>
<svg class="a" style="left:1px;top:772px" width="95" height="31" viewBox="0 0 95 31" fill="none" stroke="#000">
<rect x="7.500" y="5.500" width="19" height="19"/><path d="M10 9L23 22M10 9V14M10 9H15M23 22V17M23 22H18" stroke-width="1.200"/>
<rect x="39.500" y="5.500" width="19" height="19"/><path d="M42 23L54 9M42 22H56" stroke-width="1.200"/><text x="49" y="21" font-size="6" font-family="'Liberation Sans',sans-serif" fill="#000" stroke="none">&#945;</text>
<rect x="72.500" y="6.500" width="15" height="16" stroke-width="1.500"/><path d="M73 15H87M80 7V22M73 13L79 7" stroke-width="1.200"/>
</svg>
<div class="x" style="left:98px;top:780px;font-size:11.700px;line-height:15px;color:#111">X Y :</div>
<div class="a" style="left:144px;top:772px;width:172px;height:31px;background:#ffffd2;border:3px solid;border-color:#ffffee #a0a078 #a0a078 #ffffee"></div>
<div class="a" style="left:147px;top:775px;width:167px;height:26px;border:2px solid #a8a880"></div>
<div class="a" style="left:152px;top:776px;width:1px;height:15px;border-left:1px dotted #000"></div>
<div class="a" style="left:317px;top:772px;width:30px;height:31px;background:#ffffd2;border:3px solid #6fae9e"></div>
<div class="a" style="left:324px;top:779px;width:16px;height:17px;border:1px solid #000;font:bold 14px/15px 'Liberation Sans',sans-serif;text-align:center;color:#000">!</div>
<div class="a" style="left:348px;top:772px;width:1px;height:31px;background:#555"></div>
<div class="x" style="left:352px;top:780px;font-size:11.600px;line-height:15px;color:#111">&lt;M1&gt; - Select first area corner</div>
<div class="a" style="left:1360px;top:771px;width:80px;height:33px;background:#52c8a8;border:2px solid #3f8a80"></div>
<div class="a" style="left:1366px;top:775px;width:69px;height:25px;background:#52c8a8;border:2px solid;border-color:#c8f4ec #2f7a68 #2f7a68 #c8f4ec"></div>
<div class="x" style="left:1373px;top:780px;font-size:14px;line-height:15px;color:#0f2f28">Inch</div>
<div class="a" style="left:1417px;top:785px;width:12px;height:6px;background:#9fdcdc;border:1px solid;border-color:#d8f6f4 #2f5f58 #2f5f58 #d8f6f4"></div>

<div class="a" style="left:0;top:806px;width:1440px;height:34px;background:#9fdcdc"></div>
<div class="a" style="left:2px;top:808px;width:1438px;height:25px;background:#b2ffff;border:1px solid;border-color:#5f8f8c #fff #7f9f9c #5f8f8c"></div>
<div class="a" style="left:0;top:833px;width:1440px;height:5px;background:#d8f0ee"></div>
<div class="a" style="left:0;top:838px;width:1440px;height:2px;background:#6a6a6a"></div>
</body></html>
